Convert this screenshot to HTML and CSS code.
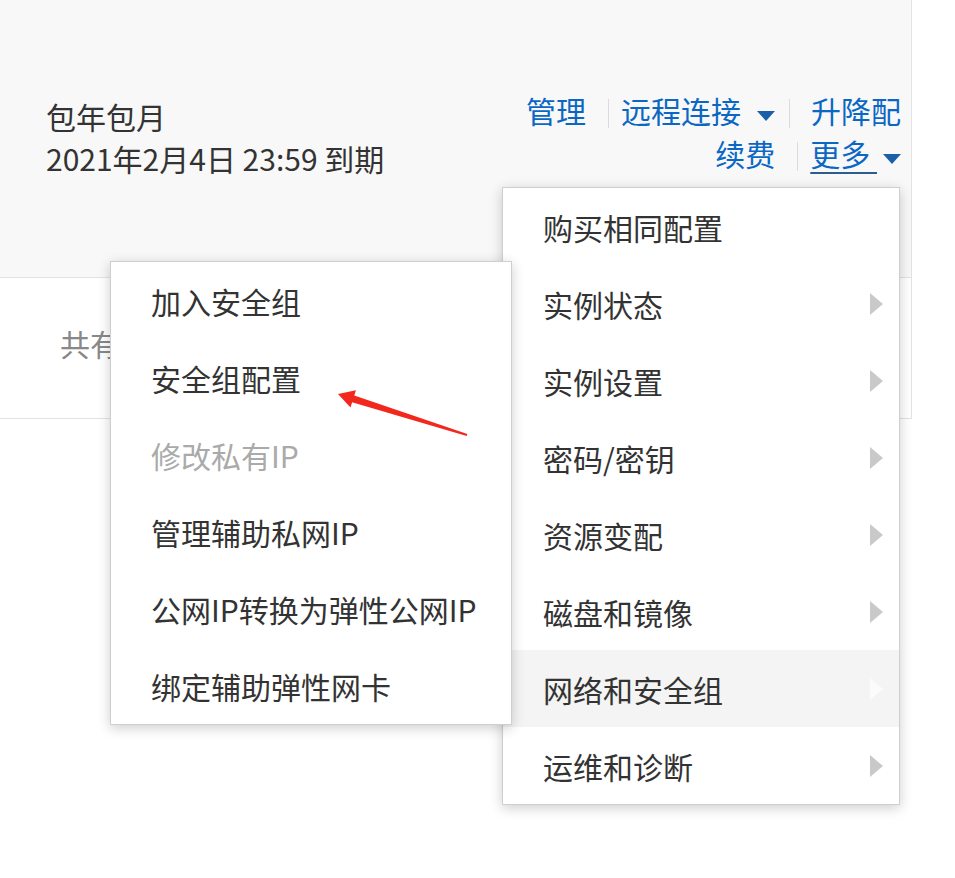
FILE: index.html
```html
<!DOCTYPE html>
<html lang="zh-CN">
  <head>
    <meta charset="UTF-8" />
    <meta name="viewport" content="width=device-width, initial-scale=1.0" />
    <title>实例详情</title>
    <link rel="stylesheet" href="styles.css">
  </head>
  <body>
    <main class="page">
      <div class="panel">
        <section class="summary">
          <div class="billing">
            <div>包年包月</div>
            <div>2021年2月4日 23:59 到期</div>
          </div>
          <div class="actions">
            <div class="action-row">
              <a class="link">管理</a>
              <span class="sep"></span>
              <a class="link">远程连接</a>
              <span class="caret"></span>
              <span class="sep sep-after-caret"></span>
              <a class="link">升降配</a>
            </div>
            <div class="action-row">
              <a class="link">续费</a>
              <span class="sep"></span>
              <a class="link link-more">更多&nbsp;</a>
              <span class="caret caret-more"></span>
            </div>
          </div>
        </section>
        <section class="list-info">共有 2 条</section>
      </div>

      <ul class="menu more-menu">
        <li class="menu-item"><span class="label">购买相同配置</span></li>
        <li class="menu-item"><span class="label">实例状态</span><span class="arrow"></span></li>
        <li class="menu-item"><span class="label">实例设置</span><span class="arrow"></span></li>
        <li class="menu-item"><span class="label">密码/密钥</span><span class="arrow"></span></li>
        <li class="menu-item"><span class="label">资源变配</span><span class="arrow"></span></li>
        <li class="menu-item"><span class="label">磁盘和镜像</span><span class="arrow"></span></li>
        <li class="menu-item active"><span class="label">网络和安全组</span><span class="arrow"></span></li>
        <li class="menu-item"><span class="label">运维和诊断</span><span class="arrow"></span></li>
      </ul>

      <ul class="menu sub-menu">
        <li class="menu-item"><span class="label">加入安全组</span></li>
        <li class="menu-item"><span class="label">安全组配置</span></li>
        <li class="menu-item disabled"><span class="label">修改私有IP</span></li>
        <li class="menu-item"><span class="label">管理辅助私网IP</span></li>
        <li class="menu-item"><span class="label">公网IP转换为弹性公网IP</span></li>
        <li class="menu-item"><span class="label">绑定辅助弹性网卡</span></li>
      </ul>

      <!-- annotation arrow -->
      <svg class="pointer" viewBox="330 380 145 60" width="145" height="60">
        <polygon fill="#f2281d" points="338,394 355.9,390.3 354.3,395.6 467.3,434 466.7,436 352.1,402.2 350.5,407.5" />
      </svg>
    </main>
  </body>
</html>
```

FILE: styles.css
```css
* {
  box-sizing: border-box;
}

body {
  margin: 0;
  background-color: #fff;
  font-family: "Noto Sans CJK SC", sans-serif;
  font-size: 30px;
  color: #333;
}

.page {
  position: relative;
  min-height: 878px;
}

.panel {
  width: 912px;
  border-right: 1px solid #e3e3e3;
}

.summary {
  height: 278px;
  padding: 88px 10px 0 46px;
  background-color: #f8f8f8;
  border-bottom: 1px solid #e3e3e3;
  display: flex;
  justify-content: space-between;
  align-items: flex-start;
}

.billing {
  margin-top: 7px;
  line-height: 42px;
}

.actions {
  display: flex;
  flex-direction: column;
  align-items: flex-end;
}

.action-row {
  display: flex;
  align-items: center;
  height: 43px;
}

.link {
  color: #0b67c4;
  cursor: pointer;
}

.link-more {
  text-decoration: underline;
  text-decoration-color: #2d5c91;
  text-decoration-thickness: 2px;
  text-underline-offset: 6px;
}

.sep {
  width: 1px;
  height: 29px;
  margin: 8px 12px 0 22px;
  background-color: #dcdcdc;
}

.sep-after-caret {
  margin-left: 14px;
  margin-right: 21px;
}

.caret {
  width: 0;
  height: 0;
  margin: 12px 0 0 16px;
  border-top: 10px solid #1b5fa9;
  border-left: 9px solid transparent;
  border-right: 9px solid transparent;
}

.caret-more {
  margin-left: 6px;
}

.list-info {
  height: 141px;
  padding: 0 0 11px 60px;
  border-bottom: 1px solid #e3e3e3;
  display: flex;
  align-items: center;
  color: #888;
}

.menu {
  position: absolute;
  margin: 0;
  padding: 0;
  list-style: none;
  background-color: #fff;
  border: 1px solid #cfcfcf;
  box-shadow: 0 3px 12px rgba(0, 0, 0, 0.2);
}

.more-menu {
  left: 502px;
  top: 187px;
  width: 398px;
}

.sub-menu {
  left: 110px;
  top: 261px;
  width: 402px;
  z-index: 2;
}

.menu-item {
  height: 77px;
  padding: 0 16px 0 40px;
  display: flex;
  align-items: center;
  justify-content: space-between;
  cursor: pointer;
}

.label {
  padding-top: 2px;
  line-height: 75px;
  white-space: nowrap;
}

.arrow {
  width: 0;
  height: 0;
  border-left: 13px solid #c9c9c9;
  border-top: 11px solid transparent;
  border-bottom: 11px solid transparent;
}

.menu-item.active {
  background-color: #f4f4f4;
}

.menu-item.active .arrow {
  border-left-color: #fbfbfb;
}

.menu-item.disabled {
  color: #aaa;
  cursor: default;
}

.pointer {
  position: absolute;
  left: 330px;
  top: 380px;
  z-index: 3;
}
```
